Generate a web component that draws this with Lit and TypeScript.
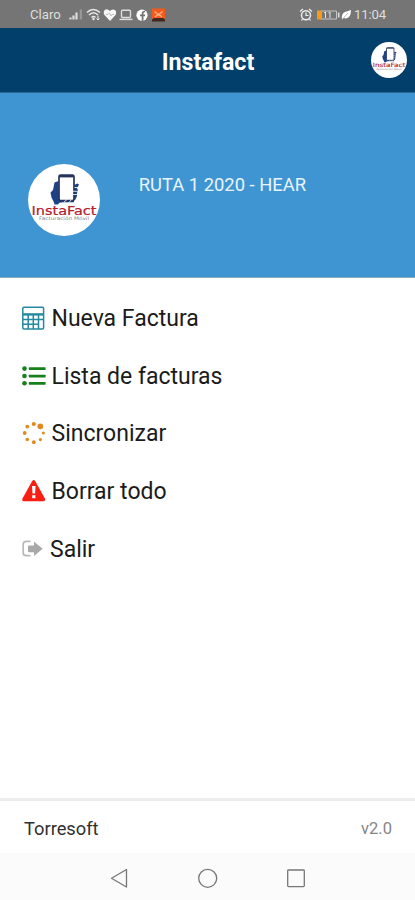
import { LitElement, html, css, svg } from "lit";
import { customElement, property } from "lit/decorators.js";

@customElement("brand-logo")
class BrandLogo extends LitElement {
  static styles = css`
    :host { display: block; }
    svg { display: block; width: 100%; height: 100%; }
    text { font-family: "DejaVu Sans", sans-serif; }
    .name { font-size: 11.6px; fill: #b3202c; stroke: #b3202c; stroke-width: 0.2px; }
    .tag { font-size: 4.8px; fill: #858585; }
  `;
  render() {
    return html`<svg viewBox="0 0 72 72">
      <circle cx="36" cy="36" r="36" fill="#fff" />
      <path d="M30.500 17L26.500 18.500L25 26L22.500 28.500L23.500 33.500L26 38.500L26.500 40.500H30L31.500 38.500L35 37.500L31 34Z" fill="#1f4287" />
      <path d="M29.500 38.500L34 36.500H46L47.500 35.500L49 32V29L50 26L49 24.500L51 20.500L49.500 19.500L46 21V34H34V38.500Z" fill="#1f4287" />
      <path d="M34 38.300H46V36H34Z" fill="#1f4287" />
      <rect x="31" y="11.200" width="15" height="25.400" rx="1.600" fill="#fff" stroke="#26345f" stroke-width="1.700" />
      <path d="M31 12.600H46" stroke="#26345f" stroke-width="1.600" />
      <path d="M45 30.500H50M45 27.300H50M46.500 23.500H50M36 38L39 35.500M41 38.500L43.500 35.500" stroke="#fff" stroke-width=".8" />
      <text class="name" x="3.500" y="50.800" textLength="65" lengthAdjust="spacingAndGlyphs">InstaFact</text>
      <text class="tag" x="11" y="56.200" textLength="50" lengthAdjust="spacingAndGlyphs">Facturación Móvil</text>
    </svg>`;
  }
}

const icons: Record<string, unknown> = {
  calculator: svg`<rect x=".8" y=".2" width="20.800" height="21.800" rx="1.200" fill="#fff" stroke="#2489a0" stroke-width="1.500"/>
    <path d="M1 7.400H21.500" stroke="#2489a0" stroke-width="2.400"/>
    <path d="M1 12.500H21.500M1 17.200H16.500M6.200 8V22M11.300 8V22M16.500 8V22" stroke="#2489a0" stroke-width="1.500" fill="none"/>`,
  list: svg`<g fill="#16801b"><circle cx="2.500" cy="3.600" r="2.300"/><circle cx="2.500" cy="11" r="2.300"/><circle cx="2.500" cy="18.300" r="2.300"/>
    <rect x="6.800" y="2.300" width="16.800" height="2.700" rx=".6"/><rect x="6.800" y="9.700" width="16.800" height="2.700" rx=".6"/><rect x="6.800" y="17" width="16.800" height="2.700" rx=".6"/></g>`,
  spinner: svg`<g fill="#e08a1e"><circle cx="11.800" cy="2" r="2.100"/><circle cx="18.300" cy="4.300" r="2.900"/><circle cx="21.400" cy="11" r="1.500"/>
    <circle cx="18.400" cy="17.600" r="1.600"/><circle cx="11.800" cy="20.200" r="1.900"/><circle cx="5.300" cy="17.500" r="1.800"/>
    <circle cx="2.700" cy="11" r="1.900"/><circle cx="5.300" cy="4.600" r="1.900"/></g>`,
  warning: svg`<path d="M10.200 1Q11.700 -1.200 13.200 1L22.900 18.400Q23.700 21 21.400 21.200H1.900Q-.5 21 .5 18.400Z" fill="#f81e12"/>
    <path d="M10 6H13.600L13.100 13.600H10.500Z" fill="#fff"/><rect x="10.200" y="15.200" width="3.200" height="3" fill="#fff"/>`,
  exit: svg`<path d="M8.500 3.300H4.200Q1.200 3.300 1.200 6.300V14.700Q1.200 17.700 4.200 17.700H8.500" fill="none" stroke="#b9b9b9" stroke-width="1.700"/>
    <path d="M7 7.400H12V3.400L20.600 10.700L12 18V14.200H7Q6 14.200 6 13.200V8.400Q6 7.400 7 7.400Z" fill="#a9a9a9"/>`,
};

@customElement("menu-item")
class MenuItem extends LitElement {
  @property() icon = "";
  static styles = css`
    :host { display: flex; align-items: center; height: 57.7px; font-size: 23px; line-height: 28px; color: #1b1b1b; white-space: nowrap; }
    svg { width: 24px; height: 24px; margin-right: 5.5px; flex: none; overflow: visible; }
    .exit { margin-right: 4px; }
  `;
  render() {
    return html`<svg class=${this.icon} viewBox="0 0 24 24">${icons[this.icon]}</svg><slot></slot>`;
  }
}

@customElement("app-root")
class AppRoot extends LitElement {
  static styles = css`
    :host { display: flex; flex-direction: column; height: 900px; box-sizing: border-box; background: #fff; font-family: Roboto, sans-serif; overflow: hidden; }
    .status { height: 28px; flex: none; background: #757575; color: #dedede; display: flex; align-items: center; justify-content: space-between; padding: 1px 29px 0 30px; box-sizing: border-box; font-size: 13.2px; }
    .side { display: flex; align-items: center; }
    .status svg { display: block; }
    .carrier { width: 31px; }
    .clock { letter-spacing: -0.15px; }
    .bar { height: 65px; flex: none; background: #02406b; display: grid; grid-template-columns: 1fr auto 1fr; align-items: center; padding: 0 8px 0 9px; box-sizing: border-box; border-bottom: 1px solid #2a6898; }
    h1 { margin: 0; padding-top: 4px; grid-column: 2; font-size: 23.2px; font-weight: 700; color: #fff; }
    .small { width: 36px; height: 36px; justify-self: end; }
    .hero { height: 185px; flex: none; background: #3f94d2; display: flex; padding: 70.500px 0 0 27.700px; box-sizing: border-box; border-bottom: 1px solid #8baabb; }
    .large { width: 72px; height: 72px; }
    .route { margin: 10px 0 0 39px; font-size: 18.400px; line-height: 22px; color: #e9f4fc; }
    .menu { flex: 1; padding: 12px 0 0 22px; }
    .foot { height: 55px; flex: none; border-top: 3px solid #ececec; box-sizing: border-box; display: flex; justify-content: space-between; align-items: center; padding: 3px 23px 0 24px; font-size: 18.300px; color: #303030; }
    .version { font-size: 16.500px; color: #858585; }
    .nav { height: 47px; flex: none; background: #fbfbfb; }
    .nav svg { display: block; }
  `;
  render() {
    return html`
      <div class="status">
        <div class="side"><span class="carrier">Claro</span>
          <svg width="106" height="20" viewBox="61 4.500 106 20" fill="none">
            <path d="M70.500 19V17M73.500 19V15M76.500 19V12" stroke="#ddd" stroke-width="2.200"/>
            <path d="M80.800 19V9" stroke="#999" stroke-width="2.200"/>
            <path d="M87 12Q93 6 100 12M89 14.500Q93.500 10 98 14.500M91.500 17Q93.500 15 95.500 17" stroke="#e8e8e8" stroke-width="1.500"/>
            <circle cx="93.500" cy="18.500" r="1.200" fill="#eee"/><path d="M98 15V19M96.500 18L98 19.500L99.500 18" stroke="#eee"/>
            <path d="M110 20.500L104.500 14.500C102.500 11.500 105 8 107.500 9Q109.500 9.500 110 10.500Q111 9 113 9C116 9 117 12 115.500 14.500Z" fill="#f6f6f6"/>
            <path d="M106 14H108L109.500 12.500L111 15.500L112 14H114" stroke="#aaa" stroke-width=".7"/>
            <rect x="121.500" y="9.800" width="9" height="7.200" rx="1" stroke="#ddd" stroke-width="1.400"/><path d="M119.500 18.900H132.500" stroke="#ddd" stroke-width="1.500"/>
            <circle cx="142" cy="14.700" r="5.600" fill="#fff"/><path d="M142.600 20.300V12.800Q142.600 11 145 11M140 14.800H145" stroke="#707070" stroke-width="1.700"/>
            <rect x="152" y="8" width="13" height="10" fill="#f35a1c"/><path d="M152 19L154 17.500H163L165 19V21H152Z" fill="#43281f"/><path d="M154.500 11L158.500 14.500L162.500 11M155 16.500L158.500 13.500L162 16.500" stroke="#ffb184" stroke-width="1.200"/>
          </svg>
        </div>
        <div class="side">
          <svg width="56" height="20" viewBox="298 4.500 56 20" fill="none">
            <circle cx="306" cy="14.800" r="4.500" stroke="#eee" stroke-width="1.500"/><path d="M306 12V15H308.500M300 11L303 8.500M309 8.500L312 11M302.500 18.500L301.500 20M309.500 18.500L310.500 20" stroke="#eee" stroke-width="1.200"/>
            <path d="M321 10.500H336.500V18.500H321" stroke="#c5c5c5" stroke-width="1"/><rect x="317" y="10" width="5" height="9" fill="#f49a22"/><path d="M338.700 12V17" stroke="#ddd" stroke-width="1.600"/>
            <path d="M324 12.500L325.500 11.500V17.500M328.500 12.500L330 11.500V17.500" stroke="#e5e5e5" stroke-width="1"/>
            <path d="M342 19Q341 13 345 11.500L351 9.500Q351 16 347.500 17.500Q345.500 18.300 344 17.500Z" fill="#fff"/><path d="M342.500 18.500L348 12.500" stroke="#888" stroke-width=".6"/>
          </svg><span class="clock">11:04</span>
        </div>
      </div>
      <header class="bar"><h1>Instafact</h1><brand-logo class="small"></brand-logo></header>
      <section class="hero"><brand-logo class="large"></brand-logo><div class="route">RUTA 1 2020 - HEAR</div></section>
      <nav class="menu">
        <menu-item icon="calculator">Nueva Factura</menu-item>
        <menu-item icon="list">Lista de facturas</menu-item>
        <menu-item icon="spinner">Sincronizar</menu-item>
        <menu-item icon="warning">Borrar todo</menu-item>
        <menu-item icon="exit">Salir</menu-item>
      </nav>
      <footer class="foot"><span>Torresoft</span><span class="version">v2.0</span></footer>
      <div class="nav"><svg width="415" height="47" viewBox="0 853 415 47" fill="none" stroke="#777" stroke-width="1.300">
        <path d="M126.500 869.500V887L111.500 878.300Z" stroke-linejoin="round"/><circle cx="207.700" cy="878.300" r="9"/><rect x="287.700" y="870" width="16.600" height="16.600" rx=".8"/>
      </svg></div>`;
  }
}
